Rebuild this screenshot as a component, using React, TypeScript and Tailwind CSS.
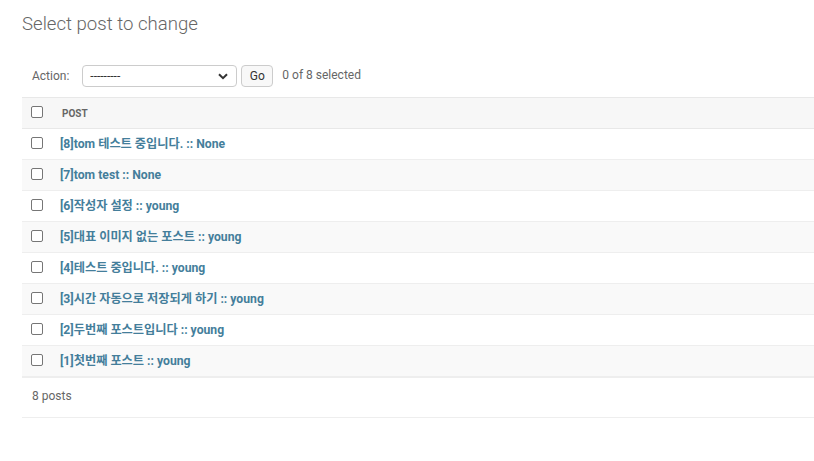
const posts = [
  "[8]tom 테스트 중입니다. :: None",
  "[7]tom test :: None",
  "[6]작성자 설정 :: young",
  "[5]대표 이미지 없는 포스트 :: young",
  "[4]테스트 중입니다. :: young",
  "[3]시간 자동으로 저장되게 하기 :: young",
  "[2]두번째 포스트입니다 :: young",
  "[1]첫번째 포스트 :: young",
];

function Box() {
  return (
    <span className="block w-[12px] h-[12px] rounded-[2px] border border-[#767676] bg-white" />
  );
}

export default function App() {
  return (
    <div
      className="min-h-[461px] bg-white pl-[22px] pt-[12px] text-[12px] text-[#333]"
      style={{ fontFamily: 'Roboto, "Noto Sans CJK KR", "Liberation Sans", sans-serif' }}
    >
      <h1 className="text-[18.6px] leading-[24px] font-light text-[#666]">Select post to change</h1>

      <div className="mt-[22px] flex items-center pl-[10px] pt-[7px] pb-[10px]">
        <span className="text-[12px] leading-[22px] text-[#666]">Action:</span>
        <div className="ml-[13px] flex h-[22px] w-[155px] items-center justify-between rounded-[4px] border border-[#cccccc] bg-white pl-[7px] pr-[8px]">
          <span className="text-[12px] leading-none text-[#333]">---------</span>
          <svg width="10" height="7" viewBox="0 0 10 7" fill="none">
            <path d="M1 1.2 5 5.2 9 1.2" stroke="#333" strokeWidth="2" />
          </svg>
        </div>
        <button className="ml-[4px] h-[22px] w-[32px] rounded-[4px] border border-[#cccccc] bg-[#f8f8f8] text-[12px] leading-none text-[#333]">
          Go
        </button>
        <span className="ml-[9px] -mt-[3px] text-[12px] leading-[22px] text-[#666]">0 of 8 selected</span>
      </div>

      <div className="border-y border-[#e8e8e8] bg-[#f7f7f7] flex h-[32px] items-center">
        <div className="pl-[9px] w-[40px] -mt-[3px]"><Box /></div>
        <span className="text-[10px] font-bold uppercase text-[#666]">Post</span>
      </div>

      {posts.map((p, i) => (
        <div
          key={p}
          className={`flex items-center ${i === posts.length - 1 ? "h-[32px] border-b-2" : "h-[31px] border-b"} border-[#eeeeee] ${i % 2 === 1 ? "bg-[#f9f9f9]" : "bg-white"}`}
        >
          <div className="pl-[9px] w-[38px] -mt-[3px]"><Box /></div>
          <a className="text-[12.2px] font-bold text-[#447e9b]" href="#">{p}</a>
        </div>
      ))}

      <div className="border-b border-[#eeeeee] pl-[10px] pt-[7px] pb-[10px] text-[12px] leading-[22px] text-[#666]">
        8 posts
      </div>
    </div>
  );
}
